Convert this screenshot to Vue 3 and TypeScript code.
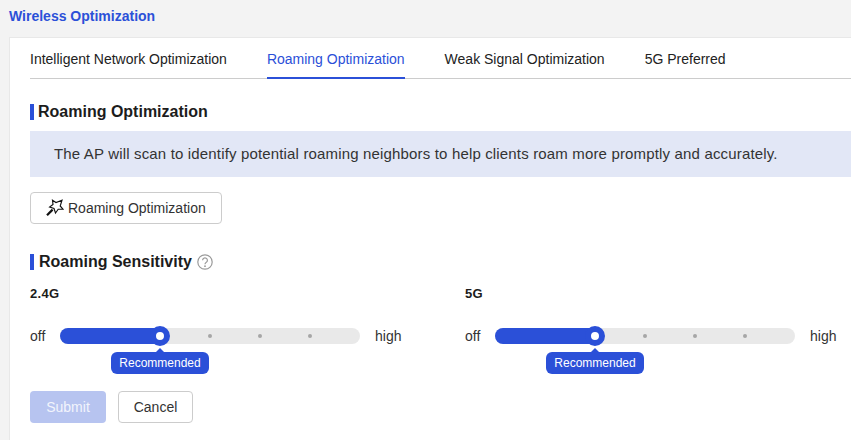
<script setup lang="ts">
const tabs = [
  'Intelligent Network Optimization',
  'Roaming Optimization',
  'Weak Signal Optimization',
  '5G Preferred',
]
const activeTab = 'Roaming Optimization'

const bands = ['2.4G', '5G']
const dots = [150, 200, 250]
</script>

<template>
  <div class="page">
    <div class="page-title">Wireless Optimization</div>
    <div class="card">
      <div class="tabs">
        <div v-for="tab in tabs" :key="tab" class="tab" :class="{ active: tab === activeTab }">{{ tab }}</div>
      </div>

      <div class="section-title first">Roaming Optimization</div>
      <div class="notice">
        The AP will scan to identify potential roaming neighbors to help clients roam more promptly and accurately.
      </div>
      <button class="btn-wand">
        <svg class="wand" width="18" height="18" viewBox="0 0 18 18" fill="none" stroke="#111" stroke-width="1.15">
          <path d="M6.5 1.2 10 3.5 16 1.2 14.2 7 17 10.2 12.2 10.2 9.5 14 8 9.5 3.6 8 7 5.5Z" />
          <path d="M6.6 10.6 1 16.2" stroke-width="2.2" />
        </svg>
        Roaming Optimization
      </button>

      <div class="section-title second">
        Roaming Sensitivity
        <svg class="help" width="16" height="16" viewBox="0 0 16 16" fill="none">
          <circle cx="8" cy="8" r="7.2" stroke="#9a9a9a" stroke-width="1.2" />
          <path d="M5.6 6.3a2.4 2.4 0 1 1 3.7 2c-.9.6-1.3 1-1.3 2" stroke="#9a9a9a" stroke-width="1.2" />
          <circle cx="8" cy="12.2" r=".9" fill="#9a9a9a" />
        </svg>
      </div>

      <div class="bands">
        <div v-for="band in bands" :key="band" class="band">
          <div class="band-name">{{ band }}</div>
          <div class="slider-row">
            <span class="off">off</span>
            <div class="track">
              <div class="fill"></div>
              <span v-for="d in dots" :key="d" class="dot" :style="{ left: d + 'px' }"></span>
              <span class="thumb"></span>
              <div class="tip">Recommended</div>
            </div>
            <span class="high">high</span>
          </div>
        </div>
      </div>

      <div class="actions">
        <button class="submit" disabled>Submit</button>
        <button class="cancel">Cancel</button>
      </div>
    </div>
  </div>
</template>

<style>
html,
body {
  margin: 0;
  overflow: hidden;
  background: #f3f3f3;
}
</style>

<style scoped>
.page {
  width: 851px;
  height: 440px;
  overflow: hidden;
  background: #f3f3f3;
  padding: 8px 0 0 9px;
  box-sizing: border-box;
  font-family: "Liberation Sans", Arial, sans-serif;
  font-size: 14px;
  color: #222;
}

.page-title {
  font-size: 14px;
  font-weight: 700;
  line-height: 16px;
  color: #2b50d8;
}

.card {
  width: 1000px;
  height: 420px;
  margin-top: 13px;
  padding: 0 0 0 20px;
  background: #fff;
  border: 1px solid #e8e8e8;
  box-sizing: border-box;
}

.tabs {
  display: flex;
  gap: 40px;
  height: 40px;
  border-bottom: 1px solid #ccc;
  box-sizing: content-box;
}

.tab {
  height: 40px;
  line-height: 42px;
  box-sizing: border-box;
}

.tab.active {
  height: 41px;
  color: #2b50d8;
  border-bottom: 2px solid #2b50d8;
}

.section-title {
  border-left: 4px solid #2b50d8;
  height: 16px;
  line-height: 16px;
  font-size: 16px;
  font-weight: 700;
  color: #1c1c1c;
  display: flex;
  align-items: center;
}

.section-title.first {
  margin-top: 25px;
  padding-left: 4px;
}

.section-title.second {
  margin-top: 30px;
  padding-left: 5px;
}

.help {
  margin-left: 5px;
}

.notice {
  margin-top: 11px;
  height: 46px;
  line-height: 46px;
  padding-left: 24px;
  background: #e2e7f6;
  color: #333;
  white-space: nowrap;
  font-size: 15px;
  letter-spacing: 0.16px;
}

.btn-wand {
  display: flex;
  align-items: center;
  gap: 4px;
  margin-top: 15px;
  width: 192px;
  height: 32px;
  padding: 0 0 0 15px;
  background: #fff;
  border: 1px solid #ccc;
  border-radius: 4px;
  box-sizing: border-box;
  font: inherit;
  color: #333;
}

.bands {
  display: flex;
  margin-top: 16px;
}

.band {
  width: 435px;
  flex: none;
}

.band-name {
  font-size: 13px;
  letter-spacing: 0.3px;
  font-weight: 700;
  line-height: 16px;
  color: #1c1c1c;
}

.slider-row {
  display: flex;
  align-items: center;
  margin-top: 24px;
  height: 20px;
}

.off {
  width: 30px;
  color: #333;
}

.high {
  margin-left: 15px;
  color: #333;
}

.track {
  position: relative;
  width: 300px;
  height: 16px;
  border-radius: 8px;
  background: #e9e9e9;
}

.fill {
  width: 100px;
  height: 16px;
  border-radius: 8px 0 0 8px;
  background: #2b50d8;
}

.dot {
  position: absolute;
  top: 6px;
  width: 4px;
  height: 4px;
  margin-left: -2px;
  border-radius: 50%;
  background: #a6a6a6;
}

.thumb {
  position: absolute;
  left: 90px;
  top: -2px;
  width: 20px;
  height: 20px;
  box-sizing: border-box;
  border: 6px solid #2b50d8;
  border-radius: 50%;
  background: #fff;
}

.tip {
  position: absolute;
  left: 51px;
  top: 24px;
  width: 98px;
  height: 22px;
  line-height: 22px;
  text-align: center;
  font-size: 12px;
  color: #fff;
  background: #2b50d8;
  border-radius: 6px;
}

.tip::before {
  content: "";
  position: absolute;
  left: 45px;
  top: -4px;
  border-left: 4px solid transparent;
  border-right: 4px solid transparent;
  border-bottom: 4px solid #2b50d8;
}

.actions {
  display: flex;
  gap: 12px;
  margin-top: 45px;
}

.actions button {
  height: 32px;
  border-radius: 4px;
  box-sizing: border-box;
  font: inherit;
  padding: 0;
}

.submit {
  width: 76px;
  border: none;
  background: #b7c4f0;
  color: #f2f4fc;
}

.cancel {
  width: 75px;
  background: #fff;
  border: 1px solid #ccc;
  color: #333;
}
</style>
